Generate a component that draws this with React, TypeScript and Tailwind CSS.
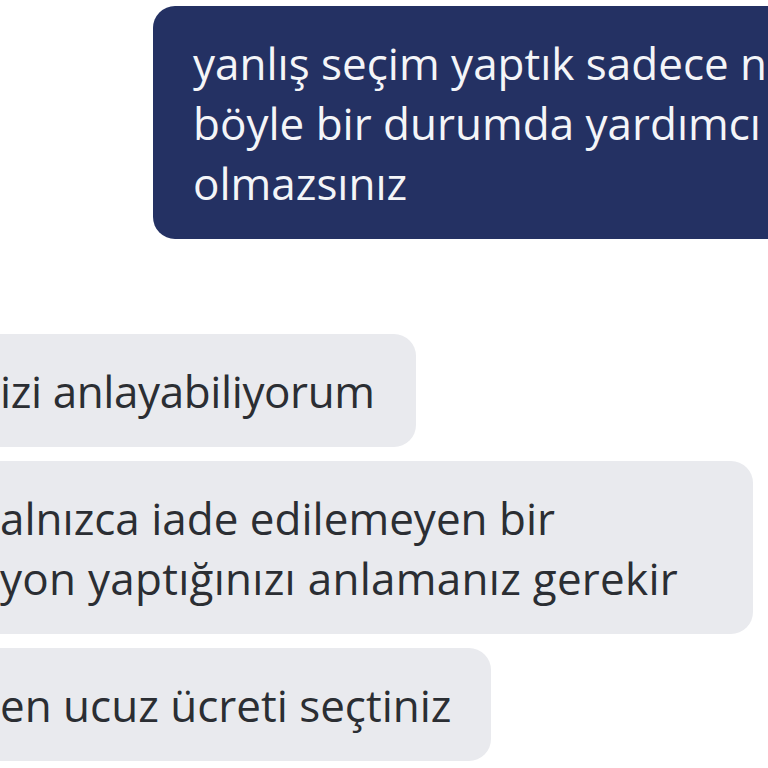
export default function App() {
  const font = { fontFamily: '"Open Sans", "Noto Sans", sans-serif' };
  return (
    <div className="w-[768px] h-[768px] overflow-hidden bg-white" style={font}>
      <div className="flex pt-[6px] pl-[153px]">
        <div className="w-[700px] shrink-0 rounded-[22px] bg-[#243163] px-[40px] pt-[27px] pb-[26px] text-[44px] leading-[60px] text-[#f4f5f8] whitespace-nowrap">
          <div>yanlış seçim yaptık sadece ne</div>
          <div>böyle bir durumda yardımcı</div>
          <div>olmazsınız</div>
        </div>
      </div>
      <div className="mt-[95px] flex flex-col items-start gap-[14px] text-[44px] leading-[60px] text-[#2b2e33] whitespace-nowrap">
        <div className="-ml-[40px] rounded-[22px] bg-[#e9eaee] pt-[27px] pb-[26px] pl-[40px] pr-[41px]">
          <div className="tracking-[-0.4px]">izi anlayabiliyorum</div>
        </div>
        <div className="-ml-[40px] rounded-[22px] bg-[#e9eaee] pt-[27px] pb-[26px] pl-[40px] pr-[75px]">
          <div>alnızca iade edilemeyen bir</div>
          <div className="tracking-[0.27px]">yon yaptığınızı anlamanız gerekir</div>
        </div>
        <div className="-ml-[40px] rounded-[22px] bg-[#e9eaee] pt-[27px] pb-[26px] pl-[40px] pr-[40px]">
          <div>en ucuz ücreti seçtiniz</div>
        </div>
      </div>
    </div>
  );
}
